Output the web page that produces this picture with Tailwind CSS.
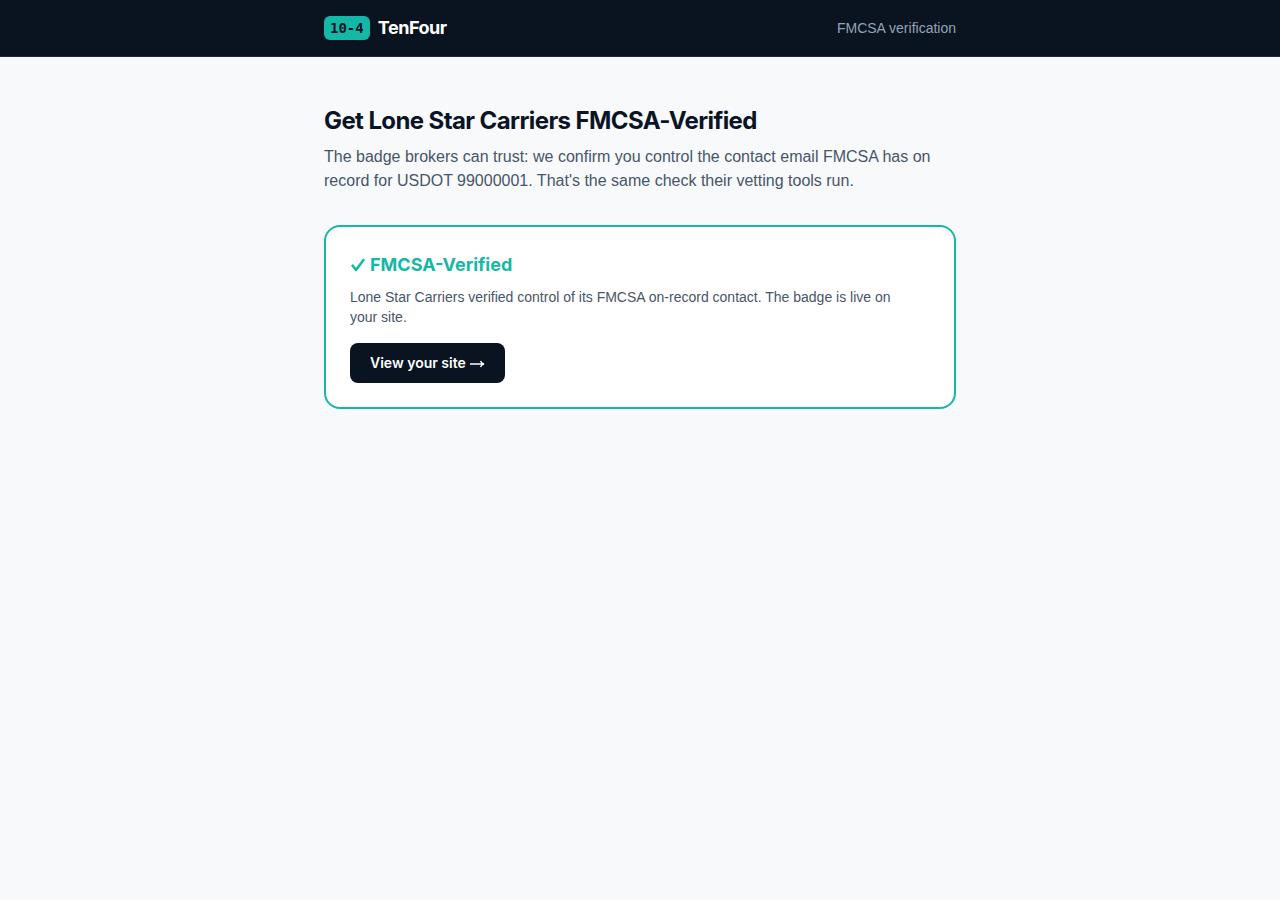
<!DOCTYPE html>
<html lang="en">

<head>
  <meta charset="UTF-8">
  <meta name="viewport" content="width=device-width, initial-scale=1.0">
  <title>TenFour - FMCSA verification</title>
  <script src="https://cdn.jsdelivr.net/npm/@tailwindcss/browser@4"></script>
</head>

<body class="bg-[#f8f9fb] min-h-screen font-['Liberation_Sans',sans-serif] text-[#0a1424] antialiased">
  <header class="bg-[#0a1420] border-b border-[#1e293b]">
    <div class="max-w-2xl mx-auto px-5 h-14 flex items-center justify-between">
      <a href="#" class="flex items-center gap-2">
        <span class="bg-[#14b8a6] rounded-md px-1.5 py-0.5 font-['DejaVu_Sans_Mono',monospace] text-sm font-bold">10-4</span>
        <span class="font-['Inter',sans-serif] text-lg font-bold tracking-tight text-white">TenFour</span>
      </a>
      <span class="text-sm text-[#94a3b8]">FMCSA verification</span>
    </div>
  </header>

  <main class="max-w-2xl mx-auto px-5 py-12">
    <h1 class="font-['Inter',sans-serif] text-2xl font-bold tracking-tight">Get Lone Star Carriers FMCSA-Verified</h1>
    <p class="mt-2 text-base text-[#475569]">The badge brokers can trust: we confirm you control the contact email FMCSA has on record for USDOT 99000001. That's the same check their vetting tools run.</p>

    <section class="mt-8 bg-white border-2 border-[#14b8a6] rounded-2xl p-6">
      <h2 class="flex items-center gap-1 font-['Inter',sans-serif] text-lg font-bold text-[#14b8a6]">
        <svg class="size-4" viewBox="0 0 16 16" fill="none" stroke="currentColor" stroke-width="2.6" stroke-linejoin="round" aria-hidden="true"><path d="M2 7.8 6 13 14 2.2" /></svg>
        FMCSA-Verified
      </h2>
      <p class="mt-2 pr-4 text-sm text-[#475569]">Lone Star Carriers verified control of its FMCSA on-record contact. The badge is live on your site.</p>
      <a href="#" class="mt-4 inline-flex items-center gap-1 bg-[#0a1420] text-white font-['Inter',sans-serif] text-sm font-semibold rounded-lg px-5 h-10">
        View your site
        <svg class="w-[15px] h-3" viewBox="0 0 15 12" fill="none" stroke="currentColor" stroke-width="1.4" aria-hidden="true"><path d="M0 7H14M10.5 4C11.2 5.8 12.4 6.7 14 7 12.4 7.3 11.2 8.2 10.5 10" /></svg>
      </a>
    </section>
  </main>
</body>

</html>
